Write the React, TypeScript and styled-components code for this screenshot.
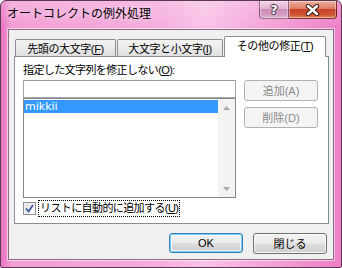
import React from "react";
import styled, { createGlobalStyle } from "styled-components";

const FONT = `"Liberation Sans", "Noto Sans CJK JP", sans-serif`;

const GlobalStyle = createGlobalStyle`
  html,
  body {
    margin: 0;
    padding: 0;
  }

  body {
    width: 342px;
    height: 268px;
    overflow: hidden;
    background: #ffffff;
    font-family: ${FONT};
  }

  * {
    box-sizing: border-box;
  }
`;

const StyledWindow = styled.div`
  width: 342px;
  height: 268px;
  display: flex;
  flex-direction: column;
  border: 1px solid #5a3a52;
  border-radius: 6px 6px 2px 2px;
  overflow: hidden;
  background:
    linear-gradient(180deg, rgba(255, 255, 255, 0.2) 0, rgba(255, 255, 255, 0) 28px),
    linear-gradient(90deg, #ec72c2 0, #f29cd5 3%, #f5abdb 45%, #f8c2e6 60%, #f3a0d7 80%, #ed7ec6 100%);
`;

const StyledTitleBar = styled.div`
  height: 28px;
  display: flex;
  align-items: flex-start;
  justify-content: space-between;
  padding-right: 4px;
`;

const StyledTitle = styled.div`
  padding: 5px 0 0 6px;
  font-size: 12px;
  line-height: 16px;
  color: #000000;
  text-shadow: 0 0 6px rgba(255, 255, 255, 0.8);
`;

const StyledCaptionButtons = styled.div`
  display: flex;
  margin-top: -1px;
`;

const StyledCaptionButton = styled.div<{ $close?: boolean }>`
  width: ${({ $close }) => ($close ? "48px" : "30px")};
  height: 19px;
  display: flex;
  align-items: center;
  justify-content: center;
  border: 1px solid ${({ $close }) => ($close ? "rgba(90, 25, 20, 0.8)" : "rgba(90, 40, 75, 0.6)")};
  border-left-width: ${({ $close }) => ($close ? "0" : "1px")};
  border-radius: ${({ $close }) => ($close ? "0 0 4px 0" : "0 0 0 4px")};
  background: ${({ $close }) =>
    $close
      ? "linear-gradient(180deg, #eeb1a2 0, #de7d66 45%, #c8432a 50%, #cf5435 80%, #e48a63 100%)"
      : "linear-gradient(180deg, #f3d3e8 0, #e2b2d1 45%, #cd8fb8 50%, #d39ac0 80%, #e2b6d3 100%)"};
  box-shadow: inset 0 0 0 1px rgba(255, 255, 255, 0.35);
  color: #ffffff;
  font-family: "DejaVu Sans", sans-serif;
  font-weight: bold;
  font-size: 13px;
  line-height: 13px;
  text-shadow:
    1px 0 0 #4a2a3f,
    -1px 0 0 #4a2a3f,
    0 1px 0 #4a2a3f,
    0 -1px 0 #4a2a3f;
`;

const StyledClient = styled.div`
  flex: 1;
  margin: 0 7px 7px 7px;
  display: flex;
  flex-direction: column;
  border: 1px solid #8f6a84;
  background: #f0f0f0;
  padding: 6px 4px 0 5px;
  box-shadow: 0 0 0 1px rgba(255, 255, 255, 0.55);
`;

const StyledTabRow = styled.div`
  height: 20px;
  display: flex;
  align-items: flex-end;
  gap: 1px;
  padding-left: 1px;
`;

const StyledTab = styled.div<{ $active?: boolean; $width: number }>`
  position: relative;
  z-index: ${({ $active }) => ($active ? 1 : 0)};
  width: ${({ $width }) => $width}px;
  height: ${({ $active }) => ($active ? "21px" : "17px")};
  margin-bottom: ${({ $active }) => ($active ? "-1px" : "0")};
  padding-top: 2px;
  border: 1px solid #898c95;
  border-bottom: none;
  border-radius: 2px 2px 0 0;
  background: ${({ $active }) =>
    $active ? "#ffffff" : "linear-gradient(180deg, #f3f3f3 0, #ebebeb 50%, #dedede 100%)"};
  color: #000000;
  font-size: 11px;
  line-height: 14px;
  letter-spacing: -0.4px;
  text-align: center;
  white-space: nowrap;
`;

const StyledPanel = styled.div`
  border: 1px solid #898c95;
  background: #ffffff;
  padding: 6px 10px 6px 8px;
`;

const StyledFieldLabel = styled.div`
  height: 17px;
  font-size: 11px;
  line-height: 15px;
  letter-spacing: -0.6px;
  color: #000000;
`;

const StyledEditor = styled.div`
  display: flex;
  gap: 8px;
`;

const StyledEditorColumn = styled.div`
  width: 213px;
  display: flex;
  flex-direction: column;
`;

const StyledSideButtons = styled.div`
  width: 74px;
  display: flex;
  flex-direction: column;
  gap: 6px;
`;

const StyledInput = styled.input`
  height: 18px;
  margin: 0;
  padding: 0 2px;
  border: 1px solid #a6a6a6;
  border-top-color: #9a9a9a;
  outline: none;
  font-family: ${FONT};
  font-size: 12px;
`;

const StyledList = styled.div`
  height: 100px;
  display: flex;
  border: 1px solid #828790;
  background: #ffffff;
`;

const StyledListItems = styled.div`
  flex: 1;
  padding-top: 1px;
`;

const StyledListItem = styled.div<{ $selected?: boolean }>`
  height: 13px;
  padding-left: 1px;
  background: ${({ $selected }) => ($selected ? "#3399ff" : "transparent")};
  color: ${({ $selected }) => ($selected ? "#ffffff" : "#000000")};
  font-family: "DejaVu Sans", sans-serif;
  font-size: 11px;
  line-height: 13px;
`;

const StyledScrollbar = styled.div`
  width: 17px;
  display: flex;
  flex-direction: column;
  justify-content: space-between;
  background-color: #f3f3f3;
  background-image: radial-gradient(#e4e4e4 0.6px, transparent 0.7px);
  background-size: 2px 2px;
`;

const StyledScrollArrow = styled.div`
  height: 17px;
  display: flex;
  align-items: center;
  justify-content: center;
`;

const StyledButton = styled.button<{ $default?: boolean }>`
  width: 74px;
  height: ${({ $default }) => ($default ? "20px" : "21px")};
  margin: 0;
  padding: 0;
  border: 1px solid ${({ $default, disabled }) => (disabled ? "#adb2b5" : $default ? "#3c7fb1" : "#707070")};
  border-radius: 3px;
  background: ${({ disabled }) =>
    disabled ? "#f4f4f4" : "linear-gradient(180deg, #f2f2f2 0, #ebebeb 48%, #dddddd 52%, #cfcfcf 100%)"};
  box-shadow: ${({ $default, disabled }) =>
    disabled
      ? "none"
      : $default
        ? "inset 0 0 0 1px #6fd0f6, inset 0 0 0 2px rgba(255, 255, 255, 0.6)"
        : "inset 0 0 0 1px rgba(255, 255, 255, 0.8)"};
  color: ${({ disabled }) => (disabled ? "#8b8b8b" : "#000000")};
  font-family: ${FONT};
  font-size: 11px;
  line-height: 14px;
`;

const StyledCheckRow = styled.div`
  height: 17px;
  margin-top: 2px;
  display: flex;
  align-items: center;
  gap: 2px;
`;

const StyledCheckbox = styled.div`
  width: 13px;
  height: 13px;
  display: flex;
  align-items: center;
  justify-content: center;
  border: 1px solid #8e8f8f;
  background: linear-gradient(135deg, #dcdcdc 0, #f4f4f4 60%, #ffffff 100%);
  box-shadow: inset 0 0 0 1px #f4f4f4;
`;

const StyledCheckLabel = styled.div`
  height: 17px;
  padding: 0 1px;
  border: 1px dotted #000000;
  font-size: 11px;
  line-height: 15px;
  letter-spacing: -0.6px;
  color: #000000;
`;

const StyledFooter = styled.div`
  margin-top: 9px;
  display: flex;
  justify-content: flex-end;
  gap: 10px;
  padding-right: 2px;
`;

const TABS = [
  { label: "先頭の大文字(", key: "F", width: 101 },
  { label: "大文字と小文字(", key: "I", width: 106 },
  { label: "その他の修正(", key: "T", width: 102, active: true },
];

export default function App() {
  return (
    <>
      <GlobalStyle />
      <StyledWindow>
        <StyledTitleBar>
          <StyledTitle>オートコレクトの例外処理</StyledTitle>
          <StyledCaptionButtons>
            <StyledCaptionButton>?</StyledCaptionButton>
            <StyledCaptionButton $close>
              <svg width="15" height="12" viewBox="0 0 15 12">
                <path d="M3 2 L12 10 M12 2 L3 10" stroke="#3b1a12" strokeWidth="4.4" strokeLinecap="round" />
                <path d="M3 2 L12 10 M12 2 L3 10" stroke="#ffffff" strokeWidth="2.4" strokeLinecap="round" />
              </svg>
            </StyledCaptionButton>
          </StyledCaptionButtons>
        </StyledTitleBar>

        <StyledClient>
          <StyledTabRow>
            {TABS.map((tab) => (
              <StyledTab key={tab.key} $active={tab.active} $width={tab.width}>
                {tab.label}
                <u>{tab.key}</u>)
              </StyledTab>
            ))}
          </StyledTabRow>

          <StyledPanel>
            <StyledFieldLabel>
              指定した文字列を修正しない(<u>O</u>):
            </StyledFieldLabel>
            <StyledEditor>
              <StyledEditorColumn>
                <StyledInput defaultValue="" />
                <StyledList>
                  <StyledListItems>
                    <StyledListItem $selected>mikkii</StyledListItem>
                  </StyledListItems>
                  <StyledScrollbar>
                    <StyledScrollArrow>
                      <svg width="7" height="4" viewBox="0 0 7 4">
                        <path d="M0 4 L3.5 0 L7 4 Z" fill="#a8a8a8" />
                      </svg>
                    </StyledScrollArrow>
                    <StyledScrollArrow>
                      <svg width="7" height="4" viewBox="0 0 7 4">
                        <path d="M0 0 L7 0 L3.5 4 Z" fill="#a8a8a8" />
                      </svg>
                    </StyledScrollArrow>
                  </StyledScrollbar>
                </StyledList>
              </StyledEditorColumn>
              <StyledSideButtons>
                <StyledButton disabled>追加(A)</StyledButton>
                <StyledButton disabled>削除(D)</StyledButton>
              </StyledSideButtons>
            </StyledEditor>
            <StyledCheckRow>
              <StyledCheckbox>
                <svg width="9" height="9" viewBox="0 0 9 9">
                  <path d="M1 4.5 L3.5 7.5 L8 1" stroke="#3d5a9e" strokeWidth="1.8" fill="none" />
                </svg>
              </StyledCheckbox>
              <StyledCheckLabel>
                リストに自動的に追加する(<u>U</u>)
              </StyledCheckLabel>
            </StyledCheckRow>
          </StyledPanel>

          <StyledFooter>
            <StyledButton $default>OK</StyledButton>
            <StyledButton>閉じる</StyledButton>
          </StyledFooter>
        </StyledClient>
      </StyledWindow>
    </>
  );
}
